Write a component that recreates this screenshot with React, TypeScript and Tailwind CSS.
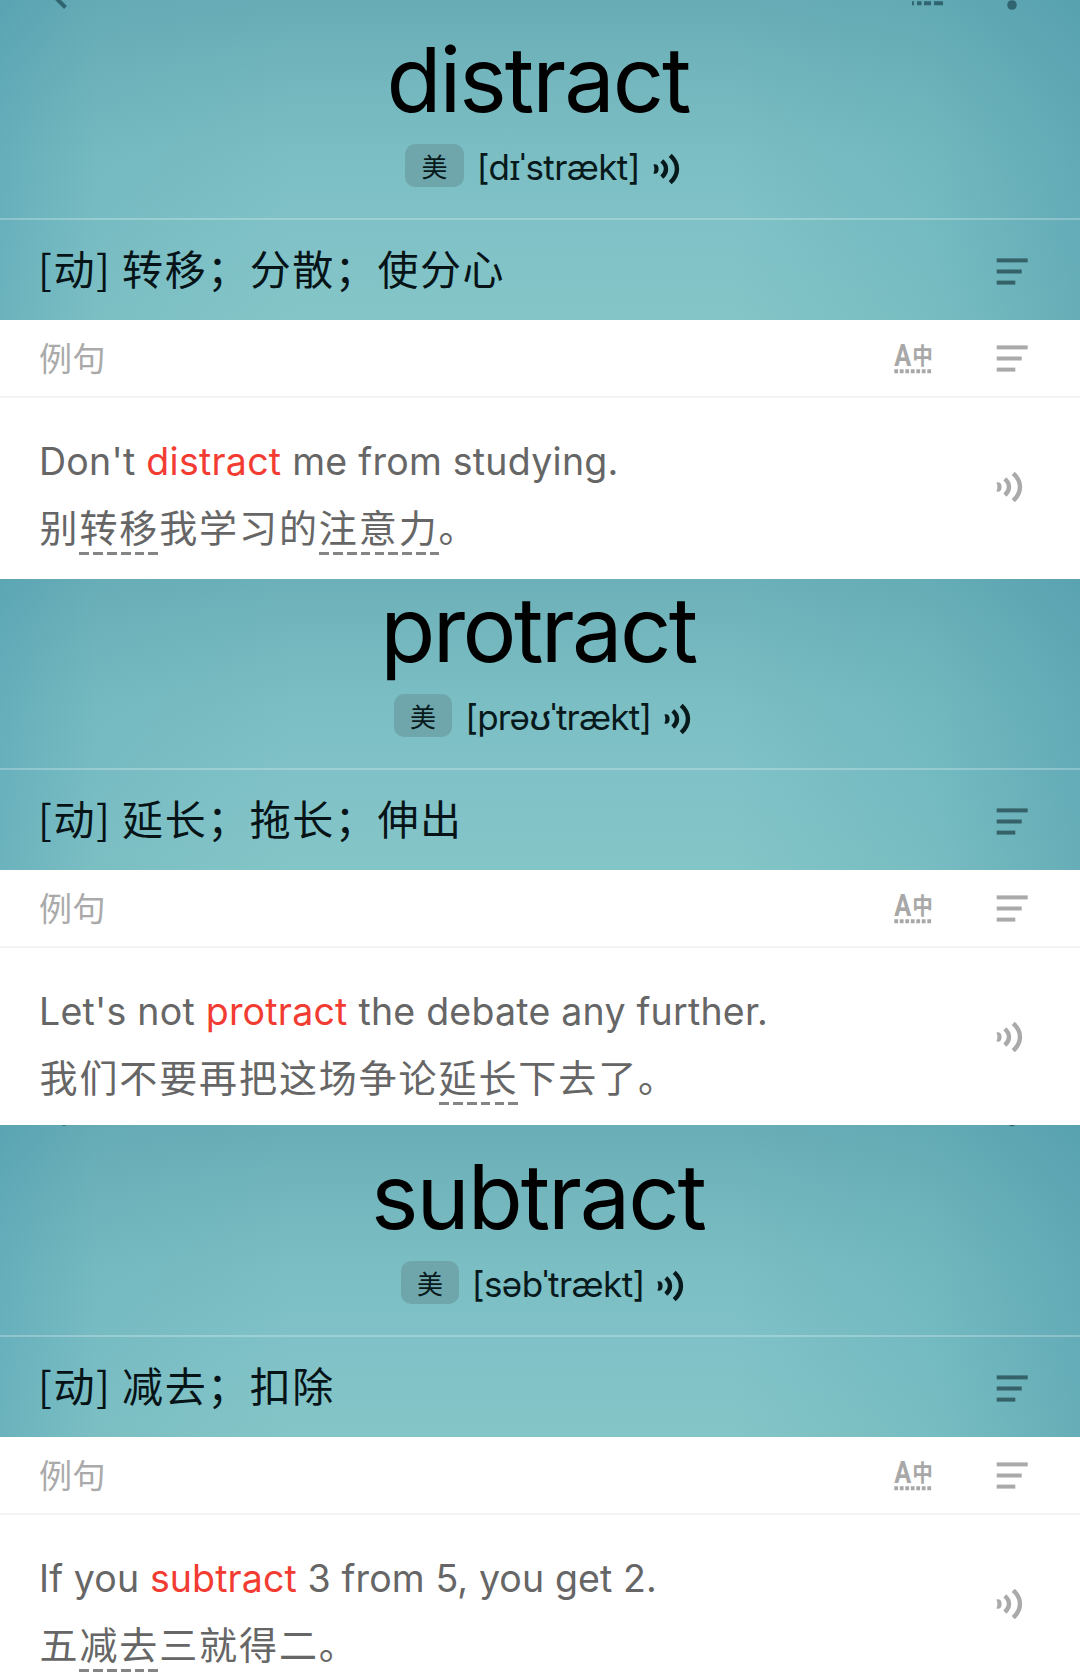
import type { ReactNode } from "react";

type Piece = { text: string; mark?: boolean };

type Entry = {
  word: string;
  wordClass: string;
  heroClass: string;
  phonetic: string;
  phoneticClass: string;
  meaning: string;
  english: Piece[];
  chinese: Piece[];
  exampleClass: string;
  englishClass: string;
  topEdge?: ReactNode;
};

function ListIcon({ className }: { className: string }) {
  return (
    <svg width="32" height="28" viewBox="0 0 32 28" fill="currentColor" className={className}>
      <rect x="0.7" y="0.4" width="31" height="4" />
      <rect x="0.7" y="11.5" width="25" height="4" />
      <rect x="0.7" y="22.6" width="18.6" height="4" />
    </svg>
  );
}

function SoundIcon({ className }: { className: string }) {
  return (
    <svg width="27" height="30" viewBox="0 0 27 30" fill="none" stroke="currentColor" strokeWidth="4.4" className={className}>
      <path d="M0.4 10.4Q5.6 9.4 5.6 15Q5.6 20.6 0.4 19.6Q2.4 15 0.4 10.4Z" fill="currentColor" stroke="none" />
      <path d="M8.8 6.9C14.4 11.6 14.4 18.4 8.8 23.1" />
      <path d="M17.2 1.4C26.2 9.4 26.2 20.6 17.2 28.6" />
    </svg>
  );
}

function TranslateIcon() {
  return (
    <svg width="44" height="54" viewBox="-3 -12 44 54" className="text-[#a8a8a8]">
      <text x="0.2" y="21.8" textLength="17" lengthAdjust="spacingAndGlyphs" fill="currentColor" className="font-['Roboto'] text-[31px] font-bold">A</text>
      <text x="18.2" y="19.8" textLength="20.6" lengthAdjust="spacingAndGlyphs" fill="currentColor" className="font-['Noto_Sans_CJK_SC',sans-serif] text-[23px] font-bold">中</text>
      <path d="M0.3 27.3H38" stroke="currentColor" strokeWidth="4" strokeDasharray="3.8 1.7" />
    </svg>
  );
}

const entries: Entry[] = [
  {
    word: "distract",
    wordClass: "tracking-[-2px]",
    heroClass: "h-[218px]",
    phonetic: "[dɪˈstrækt]",
    phoneticClass: "w-[159px] tracking-[-0.6px]",
    meaning: "转移；分散；使分心",
    english: [{ text: "Don't " }, { text: "distract", mark: true }, { text: " me from studying." }],
    chinese: [{ text: "别" }, { text: "转移", mark: true }, { text: "我学习的" }, { text: "注意力", mark: true }, { text: "。" }],
    exampleClass: "h-[181px]",
    englishClass: "tracking-[0.26px]",
    topEdge: (
      <svg width="1080" height="12" viewBox="0 0 1080 12" className="absolute left-0 top-0 text-[#2f6470]">
        <path d="M56 -2L65.5 7.5" stroke="currentColor" strokeWidth="4" />
        <path d="M912 3.2h2M917 3.2h4.5M924 3.2h7M934 3.2h9" stroke="currentColor" strokeWidth="4" />
        <circle cx="1012" cy="5" r="4.8" fill="currentColor" />
      </svg>
    ),
  },
  {
    word: "protract",
    wordClass: "tracking-[-2.6px]",
    heroClass: "h-[189px]",
    phonetic: "[prəʊˈtrækt]",
    phoneticClass: "w-[182px] tracking-[-0.8px]",
    meaning: "延长；拖长；伸出",
    english: [{ text: "Let's not " }, { text: "protract", mark: true }, { text: " the debate any further." }],
    chinese: [{ text: "我们不要再把这场争论" }, { text: "延长", mark: true }, { text: "下去了。" }],
    exampleClass: "h-[177px]",
    englishClass: "tracking-[0.23px]",
  },
  {
    word: "subtract",
    wordClass: "tracking-[-2.1px]",
    heroClass: "h-[210px]",
    phonetic: "[səbˈtrækt]",
    phoneticClass: "w-[168px] tracking-[-0.6px]",
    meaning: "减去；扣除",
    english: [{ text: "If you " }, { text: "subtract", mark: true }, { text: " 3 from 5, you get 2." }],
    chinese: [{ text: "五" }, { text: "减去", mark: true }, { text: "三就得二。" }],
    exampleClass: "h-[164px]",
    englishClass: "tracking-[0.12px]",
    topEdge: (
      <svg width="1080" height="4" viewBox="0 0 1080 4" className="absolute left-0 top-0 text-[#2f6470]">
        <circle cx="1012" cy="-3.6" r="4.8" fill="currentColor" />
        <path d="M62 0h4" stroke="currentColor" strokeWidth="1.4" />
      </svg>
    ),
  },
];

function WordCard({ entry }: { entry: Entry }) {
  return (
    <section>
      <div className="relative bg-[linear-gradient(90deg,rgba(66,148,172,0.38)_0%,rgba(80,160,175,0.16)_9%,rgba(80,165,175,0)_27%,rgba(80,165,175,0)_68%,rgba(75,160,172,0.22)_86%,rgba(70,148,167,0.48)_100%),linear-gradient(180deg,#68acb6_0%,#73b6bd_25%,#7bbec3_48%,#80c2c7_75%,#84c5c7_100%)] bg-[length:100%_320px] bg-bottom">
        {entry.topEdge}
        <div className={`flex flex-col items-center justify-end ${entry.heroClass}`}>
          <h1 className={`mr-[4px] h-[100px] shrink-0 font-['Inter'] text-[90px] leading-[100px] text-black ${entry.wordClass}`}>{entry.word}</h1>
          <div className="mb-[31px] mt-[14px] flex h-[43px] shrink-0 items-center pl-[5px]">
            <span className="flex h-[43px] w-[58.5px] items-center justify-center rounded-[10px] bg-[#6ea6ab] font-['Noto_Sans_CJK_SC',sans-serif] text-[26px] leading-none text-[#08191c]">美</span>
            <span className={`ml-[15px] flex justify-center whitespace-nowrap pt-[3px] font-['Inter','Noto_Sans',sans-serif] text-[35px] leading-[43px] text-[#08191c] ${entry.phoneticClass}`}>{entry.phonetic}</span>
            <SoundIcon className="ml-[15px] mt-[7px] text-[#08191c]" />
          </div>
        </div>
        <div className="flex h-[102px] items-center justify-between border-t-2 border-white/25 pl-[38px] pr-[52px]">
          <p className="pb-[7px] font-['Noto_Sans_CJK_SC',sans-serif] text-[41px] leading-[60px] tracking-[1.55px] text-[#071417]">
            [动] {entry.meaning}
          </p>
          <ListIcon className="mt-[3px] text-[#356168]" />
        </div>
      </div>
      <div className="flex h-[78px] items-center border-b-2 border-[#f3f3f3] bg-white pl-[39px] pr-[52px]">
        <span className="pb-[3px] font-['Noto_Sans_CJK_SC',sans-serif] text-[33px] leading-[48px] tracking-[0.6px] text-[#aaaaaa]">例句</span>
        <span className="ml-auto mr-[61px] mt-[2px]">
          <TranslateIcon />
        </span>
        <ListIcon className="mt-[2px] text-[#aaaaaa]" />
      </div>
      <div className={`flex items-start justify-between overflow-hidden bg-white pl-[39px] pr-[57px] pt-[31px] ${entry.exampleClass}`}>
        <div className="text-[#666666]">
          <p className={`whitespace-pre font-['Inter'] text-[37.5px] leading-[66px] ${entry.englishClass}`}>
            {entry.english.map((piece) => (
              <span key={piece.text} className={piece.mark ? "text-[#f23c32]" : ""}>{piece.text}</span>
            ))}
          </p>
          <p className="flex pl-[0.5px] font-['Noto_Sans_CJK_SC',sans-serif] text-[38px] leading-[62px] tracking-[1.9px]">
            {entry.chinese.map((piece) => (
              <span
                key={piece.text}
                className={
                  piece.mark
                    ? "bg-[repeating-linear-gradient(90deg,#858585_0px,#858585_9.8px,transparent_9.8px,transparent_13.9px)] bg-[length:100%_3px] bg-[position:0_57px] bg-no-repeat"
                    : ""
                }
              >
                {piece.text}
              </span>
            ))}
          </p>
        </div>
        <SoundIcon className="mt-[43px] text-[#aaaaaa]" />
      </div>
    </section>
  );
}

export default function App() {
  return (
    <main className="h-[1679px] w-[1080px] overflow-hidden bg-white">
      {entries.map((entry) => (
        <WordCard key={entry.word} entry={entry} />
      ))}
    </main>
  );
}
